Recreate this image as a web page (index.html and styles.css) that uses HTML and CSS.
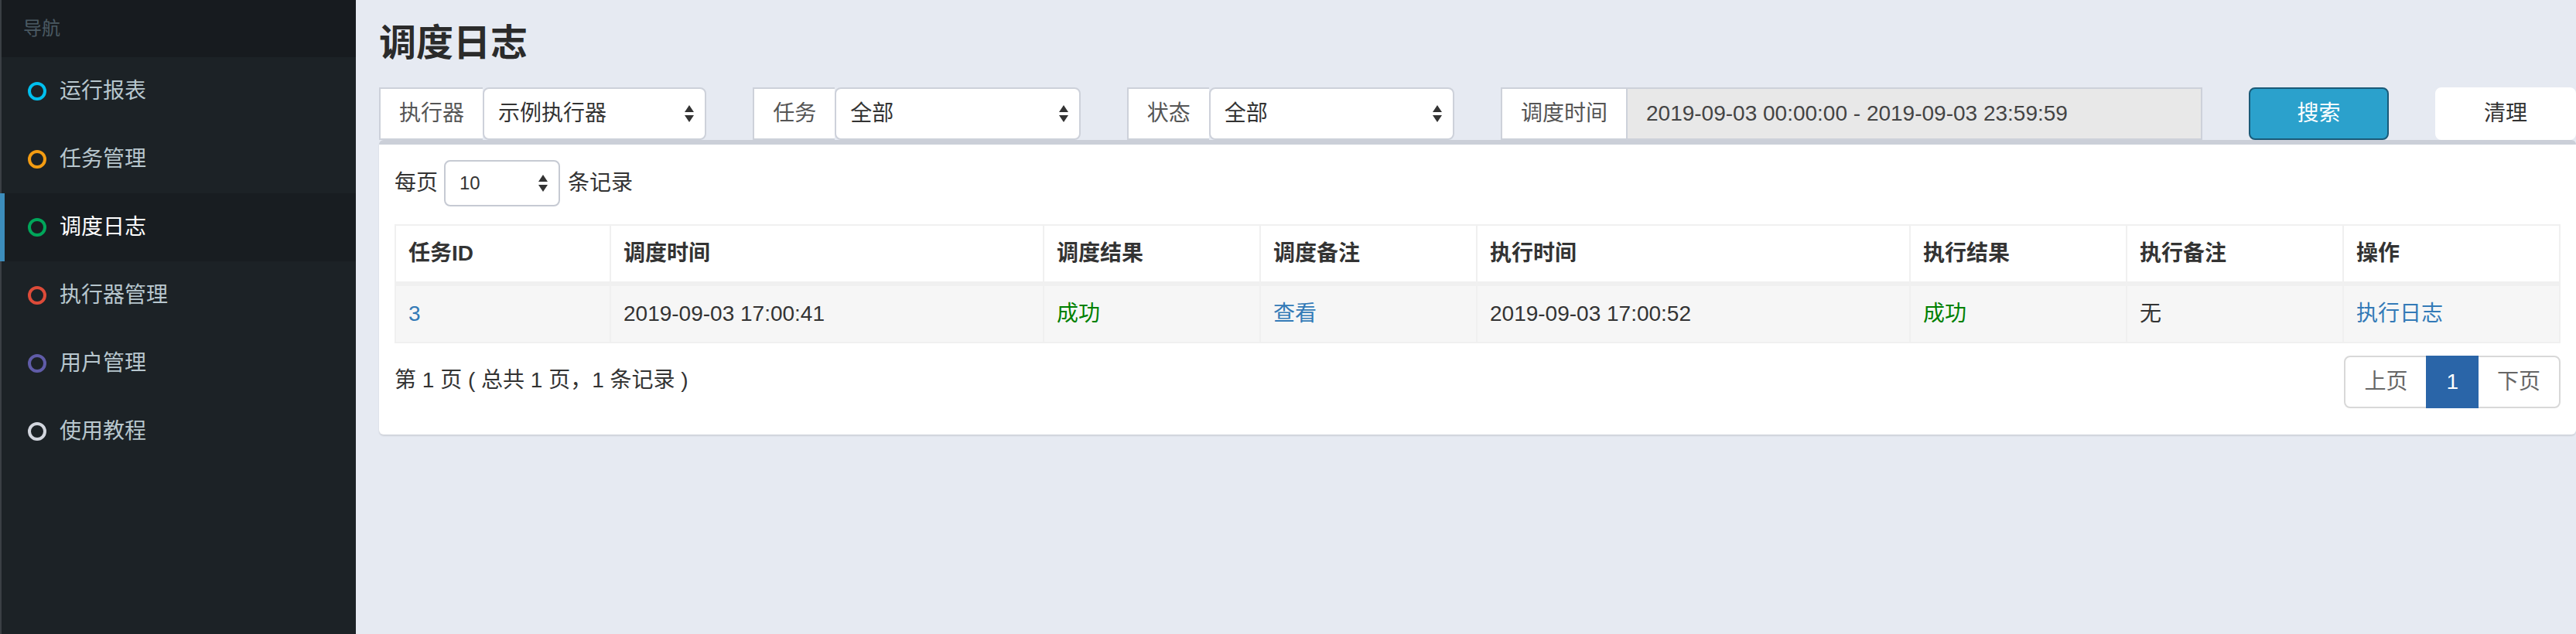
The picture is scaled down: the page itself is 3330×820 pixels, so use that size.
FILE: index.html
```html
<!DOCTYPE html>
<html lang="zh-CN">
<head>
<meta charset="utf-8">
<title>调度日志</title>
<link rel="stylesheet" href="styles.css">
</head>
<body>
<div class="wrapper">
  <aside class="sidebar">
    <ul class="sidebar-menu">
      <li class="menu-header">导航</li>
      <li class="menu-item"><a href="#"><svg class="ring ring-aqua" viewBox="0 0 12 12"><circle cx="6" cy="6" r="5"/></svg><span>运行报表</span></a></li>
      <li class="menu-item"><a href="#"><svg class="ring ring-yellow" viewBox="0 0 12 12"><circle cx="6" cy="6" r="5"/></svg><span>任务管理</span></a></li>
      <li class="menu-item active"><a href="#"><svg class="ring ring-green" viewBox="0 0 12 12"><circle cx="6" cy="6" r="5"/></svg><span>调度日志</span></a></li>
      <li class="menu-item"><a href="#"><svg class="ring ring-red" viewBox="0 0 12 12"><circle cx="6" cy="6" r="5"/></svg><span>执行器管理</span></a></li>
      <li class="menu-item"><a href="#"><svg class="ring ring-purple" viewBox="0 0 12 12"><circle cx="6" cy="6" r="5"/></svg><span>用户管理</span></a></li>
      <li class="menu-item"><a href="#"><svg class="ring ring-gray" viewBox="0 0 12 12"><circle cx="6" cy="6" r="5"/></svg><span>使用教程</span></a></li>
    </ul>
  </aside>

  <main class="content-wrapper">
    <section class="content-header">
      <h1>调度日志</h1>
    </section>
    <section class="content">
      <div class="filter-row">
        <div class="col col-2">
          <div class="input-group">
            <span class="addon">执行器</span>
            <div class="select"><span>示例执行器</span><svg class="updown" viewBox="0 0 6 11"><path d="M0 4.5 L3 0 L6 4.5 Z M0 6.5 L3 11 L6 6.5 Z"/></svg></div>
          </div>
        </div>
        <div class="col col-2">
          <div class="input-group">
            <span class="addon">任务</span>
            <div class="select"><span>全部</span><svg class="updown" viewBox="0 0 6 11"><path d="M0 4.5 L3 0 L6 4.5 Z M0 6.5 L3 11 L6 6.5 Z"/></svg></div>
          </div>
        </div>
        <div class="col col-2">
          <div class="input-group">
            <span class="addon">状态</span>
            <div class="select"><span>全部</span><svg class="updown" viewBox="0 0 6 11"><path d="M0 4.5 L3 0 L6 4.5 Z M0 6.5 L3 11 L6 6.5 Z"/></svg></div>
          </div>
        </div>
        <div class="col col-4">
          <div class="input-group">
            <span class="addon">调度时间</span>
            <div class="date-input">2019-09-03 00:00:00 - 2019-09-03 23:59:59</div>
          </div>
        </div>
        <div class="col col-1"><button class="btn btn-search" type="button">搜索</button></div>
        <div class="col col-1"><button class="btn btn-clear" type="button">清理</button></div>
      </div>

      <div class="box">
        <div class="box-body">
          <div class="length">
            <span>每页</span>
            <div class="len-select"><span>10</span><svg class="updown" viewBox="0 0 6 11"><path d="M0 4.5 L3 0 L6 4.5 Z M0 6.5 L3 11 L6 6.5 Z"/></svg></div>
            <span>条记录</span>
          </div>

          <table class="log-table">
            <colgroup>
              <col class="w10"><col class="w20"><col class="w10"><col class="w10"><col class="w20"><col class="w10"><col class="w10"><col class="w10">
            </colgroup>
            <thead>
              <tr>
                <th>任务ID</th><th>调度时间</th><th>调度结果</th><th>调度备注</th><th>执行时间</th><th>执行结果</th><th>执行备注</th><th>操作</th>
              </tr>
            </thead>
            <tbody>
              <tr>
                <td><a href="#">3</a></td>
                <td>2019-09-03 17:00:41</td>
                <td><span class="ok">成功</span></td>
                <td><a href="#">查看</a></td>
                <td>2019-09-03 17:00:52</td>
                <td><span class="ok">成功</span></td>
                <td>无</td>
                <td><a href="#">执行日志</a></td>
              </tr>
            </tbody>
          </table>

          <div class="table-footer">
            <div class="info">第 1 页 ( 总共 1 页，1 条记录 )</div>
            <ul class="pagination">
              <li><a href="#">上页</a></li>
              <li class="active"><a href="#">1</a></li>
              <li><a href="#">下页</a></li>
            </ul>
          </div>
        </div>
      </div>
    </section>
  </main>
</div>
</body>
</html>
```

FILE: styles.css
```css
html {
  zoom: 2;
}

html, body {
  margin: 0;
  padding: 0;
  overflow: hidden;
}

body {
  font-family: "Helvetica Neue", Helvetica, Arial, "Liberation Sans", "Noto Sans CJK SC", sans-serif;
  font-size: 14px;
  line-height: 20px;
  color: #333;
  background: #e6eaf2;
  width: 1665px;
  height: 410px;
}

* {
  box-sizing: border-box;
}

a {
  color: #337ab7;
  text-decoration: none;
}

.wrapper {
  display: flex;
  width: 1680px;
  height: 410px;
}

/* Sidebar */
.sidebar {
  flex: none;
  width: 230px;
  height: 410px;
  background: #1c2226;
  box-shadow: inset 1px 0 0 #3a3f44;
}

.sidebar-menu {
  list-style: none;
  margin: 0;
  padding: 0;
}

.menu-header {
  padding: 10px 25px 10px 15px;
  font-size: 12px;
  line-height: 17px;
  color: #4b5a63;
  background: #171b1f;
  box-shadow: inset 1px 0 0 #3a3f44;
}

.menu-item a {
  display: flex;
  align-items: center;
  padding: 12px 5px 12px 18px;
  color: #b8c7ce;
  line-height: 20px;
}

.menu-item.active a {
  background: #181d21;
  border-left: 3px solid #3c8dbc;
  padding-left: 15px;
  color: #fff;
}

.ring {
  width: 12px;
  height: 12px;
  margin-right: 8.5px;
  fill: none;
  stroke: currentColor;
  stroke-width: 2;
  flex: none;
}

.ring-aqua { color: #00c0ef; }
.ring-yellow { color: #f39c12; }
.ring-green { color: #00a65a; }
.ring-red { color: #dd4b39; }
.ring-purple { color: #605ca8; }
.ring-gray { color: #d2d6de; }

/* Content */
.content-wrapper {
  flex: none;
  width: 1450px;
}

.content-header {
  padding: 15px 15px 0 15px;
}

.content-header h1 {
  margin: 0;
  font-size: 24px;
  line-height: 1.1;
  font-weight: 600;
  color: #2b2b2b;
}

.content {
  padding: 15px;
}

.filter-row {
  display: flex;
  margin: 0 -15px;
}

.col {
  flex: none;
  padding: 0 15px;
}

.col-1 { width: 8.33333%; }
.col-2 { width: 16.66667%; }
.col-4 { width: 33.33333%; }

.input-group {
  display: flex;
  height: 34px;
}

.addon {
  flex: none;
  padding: 6px 12px;
  border: 1px solid #cdd1da;
  border-right: 0;
  background: #fff;
  color: #555;
  white-space: nowrap;
}

.select {
  flex: 1;
  display: flex;
  align-items: center;
  justify-content: space-between;
  padding: 0 7px 0 9px;
  border: 1px solid #cdd1da;
  border-radius: 4px;
  background: #fff;
  color: #333;
}

.updown {
  width: 6px;
  height: 11px;
  fill: #333;
  flex: none;
}

.date-input {
  flex: 1;
  padding: 6px 12px;
  border: 1px solid #cdd1da;
  background: #e8e8e8;
  color: #444;
  white-space: nowrap;
}

.btn {
  display: block;
  width: 100%;
  height: 34px;
  padding: 6px 12px;
  border-radius: 4px;
  font-family: inherit;
  font-size: 14px;
  line-height: 20px;
}

.btn-search {
  background: #2ba1cc;
  border: 1px solid #1a5a78;
  color: #fff;
}

.btn-clear {
  background: #fff;
  border: 1px solid #fff;
  color: #333;
}

/* Box */
.box {
  background: #fff;
  border-top: 3px solid #cbcfd8;
  border-radius: 3px;
  box-shadow: 0 1px 1px rgba(0, 0, 0, 0.1);
}

.box-body {
  padding: 10px;
}

.length {
  display: flex;
  align-items: center;
  height: 30px;
}

.len-select {
  display: flex;
  align-items: center;
  justify-content: space-between;
  width: 75px;
  height: 30px;
  margin: 0 5px 0 4px;
  padding: 0 7px 0 9px;
  border: 1px solid #c6cad3;
  border-radius: 4px;
  font-size: 12px;
  color: #333;
}

.log-table {
  width: 100%;
  margin-top: 11.5px;
  table-layout: fixed;
  border-collapse: separate;
  border-spacing: 0;
}

.w10 { width: 10%; }
.w20 { width: 20%; }

.log-table th,
.log-table td {
  padding: 8px;
  text-align: left;
  line-height: 20px;
  border-top: 1px solid #f0f0f0;
  border-right: 1px solid #f0f0f0;
  white-space: nowrap;
}

.log-table th:first-child,
.log-table td:first-child {
  border-left: 1px solid #f0f0f0;
}

.log-table th {
  font-weight: bold;
  color: #333;
  border-bottom: 2px solid #f0f0f0;
  background: #fff;
}

.log-table td {
  border-bottom: 1px solid #f0f0f0;
  background: #f6f6f6;
  color: #333;
}

.ok {
  color: green;
}

.table-footer {
  display: flex;
  justify-content: space-between;
  align-items: flex-start;
  margin-top: 6px;
  margin-bottom: 5px;
}

.info {
  padding-top: 8px;
  color: #333;
  white-space: nowrap;
}

.pagination {
  display: flex;
  list-style: none;
  margin: 2px 0;
  padding: 0;
}

.pagination a {
  display: block;
  padding: 6px 12px;
  line-height: 20px;
  border: 1px solid #d8d8d8;
  margin-left: -1px;
  background: #fff;
  color: #666;
}

.pagination li:first-child a {
  margin-left: 0;
  border-radius: 4px 0 0 4px;
}

.pagination li:last-child a {
  border-radius: 0 4px 4px 0;
}

.pagination .active a {
  position: relative;
  background: #2a65a8;
  border-color: #2a65a8;
  color: #fff;
}
```
